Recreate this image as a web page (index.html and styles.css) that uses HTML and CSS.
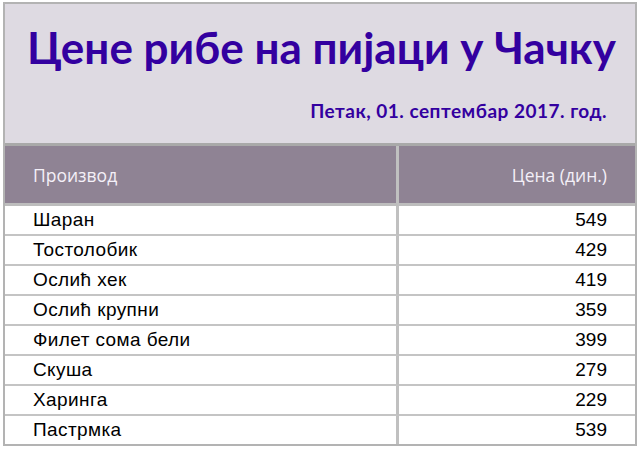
FILE: index.html
```html
<!DOCTYPE html>
<html lang="sr">
<head>
<meta charset="utf-8">
<title>Цене рибе на пијаци у Чачку</title>
<link rel="stylesheet" href="styles.css">
</head>
<body>
<div class="sheet">
  <div class="band">
    <h1 class="title">Цене рибе на пијаци у Чачку</h1>
    <p class="date">Петак, 01. септембар 2017. год.</p>
  </div>
  <div class="grid">
    <div class="cell head">Производ</div>
    <div class="cell head num">Цена (дин.)</div>
    <div class="cell">Шаран</div><div class="cell num">549</div>
    <div class="cell">Тостолобик</div><div class="cell num">429</div>
    <div class="cell">Ослић хек</div><div class="cell num">419</div>
    <div class="cell">Ослић крупни</div><div class="cell num">359</div>
    <div class="cell">Филет сома бели</div><div class="cell num">399</div>
    <div class="cell">Скуша</div><div class="cell num">279</div>
    <div class="cell">Харинга</div><div class="cell num">229</div>
    <div class="cell last">Пастрмка</div><div class="cell num last">539</div>
  </div>
</div>
</body>
</html>
```
FILE: styles.css
```css
html, body { margin: 0; padding: 0; background: #ffffff; }
.sheet {
  margin: 2px 0 0 3px;
  width: 634px;
  border: 2px solid #b3b3b3;
  box-sizing: border-box;
  background: #ffffff;
}
.band {
  height: 142px;
  background: #dedae2;
  border-bottom: 3px solid #a9a9a9;
  box-sizing: border-box;
  display: flex;
  flex-direction: column;
  padding: 18px 28px 0 22px;
}
.title {
  margin: 0;
  font-family: Lato, "Open Sans", sans-serif;
  font-weight: 700;
  font-size: 44px;
  line-height: 50px;
  white-space: nowrap;
  color: #3300a0;
  text-align: center;
}
.date {
  margin: 28px 0 0;
  font-family: Lato, "Open Sans", sans-serif;
  font-weight: 700;
  font-size: 19px;
  letter-spacing: 0.5px;
  color: #3300a0;
  text-align: right;
  line-height: 22px;
  white-space: nowrap;
}
.grid {
  display: grid;
  grid-template-columns: 394px 1fr;
}
.cell {
  height: 28px;
  border-bottom: 2px solid #c4c4c4;
  padding: 0 0 0 28px;
  display: flex;
  align-items: center;
  font-family: "Liberation Sans", Arial, sans-serif;
  font-size: 19px;
  letter-spacing: 0.4px;
  color: #000000;
}
.cell:nth-child(odd) { border-right: 3px solid #c0c0c0; }
.cell.num { justify-content: flex-end; padding: 0 28px 0 0; letter-spacing: 0; }
.cell.head {
  height: 57px;
  background: #8f8394;
  color: #f4f0f8;
  font-family: "Open Sans", sans-serif;
  font-size: 17.5px;
  letter-spacing: 0;
  border-bottom: 3px solid #bdbdbd;
}
.cell.last { border-bottom: none; }
```
